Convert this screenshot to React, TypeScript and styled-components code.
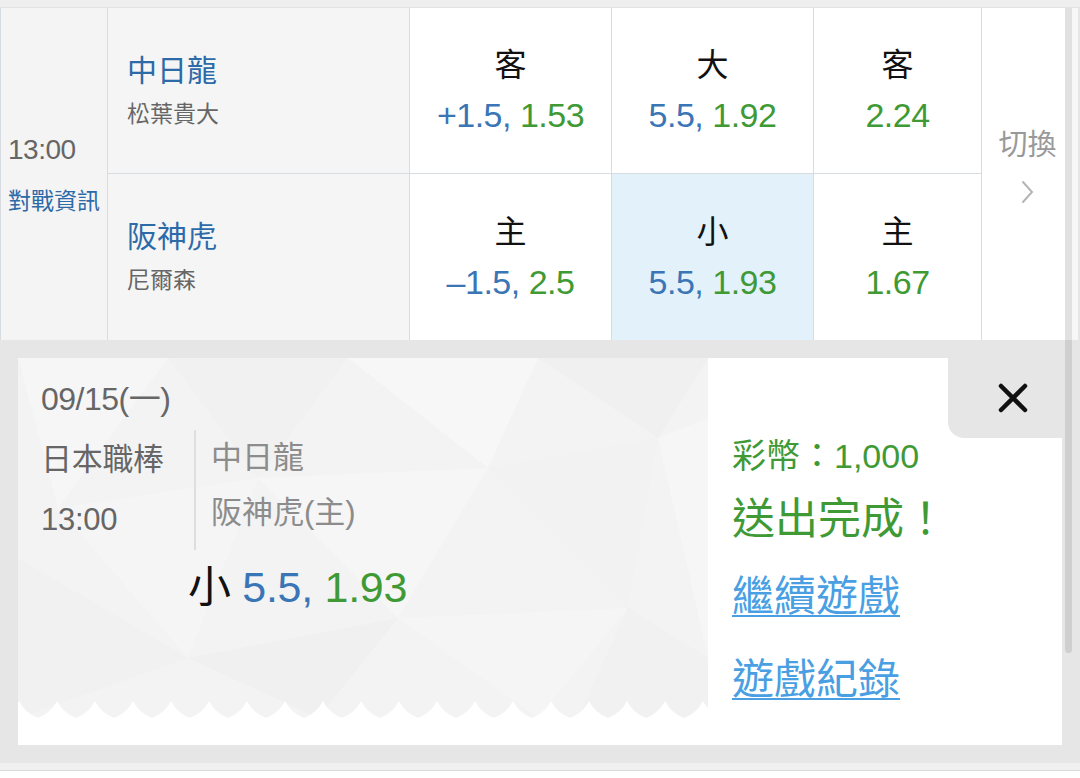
import styled, { createGlobalStyle } from "styled-components";

const GlobalStyle = createGlobalStyle`
  html, body {
    margin: 0;
    padding: 0;
    background: #fff;
  }
  body {
    width: 1080px;
    height: 778px;
    overflow: hidden;
    font-family: "Liberation Sans", "Noto Sans CJK TC", sans-serif;
  }
`

const BLUE = '#3a76b6'
const GREEN = '#3f9a36'
const LINE = '#d7dce1'

const polyArt = encodeURIComponent(`<svg xmlns='http://www.w3.org/2000/svg' width='690' height='360' viewBox='0 0 690 360'>
<rect width='690' height='360' fill='#f3f3f3'/>
<polygon points='0,0 150,0 40,150' fill='#f6f6f6'/>
<polygon points='150,0 330,0 240,120' fill='#f1f1f1'/>
<polygon points='40,150 240,120 170,300' fill='#f5f5f5'/>
<polygon points='330,0 520,0 470,110' fill='#f7f7f7'/>
<polygon points='520,0 690,0 640,80' fill='#f0f0f0'/>
<polygon points='240,120 470,110 380,260' fill='#f6f6f6'/>
<polygon points='470,110 640,80 610,250' fill='#f2f2f2'/>
<polygon points='640,80 690,60 690,300' fill='#f6f6f6'/>
<polygon points='0,200 170,300 0,360' fill='#f1f1f1'/>
<polygon points='170,300 380,260 300,360' fill='#f0f0f0'/>
<polygon points='380,260 610,250 520,360' fill='#f5f5f5'/>
<polygon points='610,250 690,300 690,360 560,360' fill='#f1f1f1'/>
</svg>`)

const toothArt = encodeURIComponent(`<svg xmlns='http://www.w3.org/2000/svg' width='38' height='17' viewBox='0 0 38 17'>
<path d='M0 17 Q 13 12 19 0 Q 25 12 38 17 Z' fill='#ffffff'/>
</svg>`)

const Page = styled.div`
  display: flex;
  flex-direction: column;
  width: 1080px;
  height: 778px;
`

const TopStrip = styled.div`
  height: 8px;
  background: #eeeeee;
  border-bottom: 1px solid #e2e2e2;
  box-sizing: border-box;
`

const MatchTable = styled.div`
  display: grid;
  grid-template-columns: 108px 302px 202px 202px 168px 81px 17px;
  grid-template-rows: 166px 166px;
`

const TimeCell = styled.div`
  grid-row: span 2;
  display: flex;
  flex-direction: column;
  justify-content: center;
  padding: 0 0 4px 7px;
  background: #f4f4f4;
  border-left: 1px solid ${LINE};
  border-right: 1px solid ${LINE};
  box-sizing: border-box;
`

const KickOff = styled.div`
  font-size: 28px;
  line-height: 38px;
  color: #666;
  letter-spacing: -0.5px;
`

const InfoLink = styled.div`
  margin-top: 19px;
  font-size: 23px;
  line-height: 26px;
  color: #2d6aa8;
`

const TeamCell = styled.div<{ $top?: boolean }>`
  display: flex;
  flex-direction: column;
  justify-content: center;
  padding: 0 0 2px 19px;
  background: #f5f5f5;
  border-right: 1px solid ${LINE};
  border-bottom: ${p => (p.$top ? `1px solid ${LINE}` : 'none')};
  box-sizing: border-box;
`

const TeamName = styled.div`
  font-size: 30px;
  line-height: 40px;
  color: #2d6aa8;
`

const Pitcher = styled.div`
  margin-top: 8px;
  font-size: 23px;
  line-height: 30px;
  color: #666;
`

const OddCell = styled.div<{ $top?: boolean; $picked?: boolean }>`
  display: flex;
  flex-direction: column;
  align-items: center;
  justify-content: center;
  background: ${p => (p.$picked ? '#e3f1fb' : '#fff')};
  border-right: 1px solid ${LINE};
  border-bottom: ${p => (p.$top ? `1px solid ${LINE}` : 'none')};
  box-sizing: border-box;
`

const OddLabel = styled.div`
  font-size: 32px;
  line-height: 40px;
  color: #111;
`

const OddValue = styled.div`
  margin-top: 9px;
  font-size: 34px;
  line-height: 42px;
  letter-spacing: -0.5px;
`

const Blue = styled.span`
  color: ${BLUE};
`

const Green = styled.span`
  color: ${GREEN};
`

const SwitchCell = styled.div`
  grid-row: span 2;
  display: flex;
  flex-direction: column;
  align-items: center;
  justify-content: center;
  background: #fff;
  padding: 0 0 16px 10px;
  color: #999;
`

const SwitchText = styled.div`
  font-size: 29px;
  line-height: 36px;
`

const ScrollCell = styled.div`
  grid-row: span 2;
  background: linear-gradient(to right, #fff 0 2px, #e1e1e1 2px 9px, #f7f7f7 9px 15px, #e6e6e6 15px);
`

const Overlay = styled.div`
  position: relative;
  height: 423px;
  padding: 18px;
  box-sizing: border-box;
  background: #e6e6e6;
`

const ScrollThumb = styled.div`
  position: absolute;
  left: 1065px;
  top: 0;
  width: 7px;
  height: 313px;
  border-radius: 0 0 4px 4px;
  background: #cfcfcf;
`

const Card = styled.div`
  position: relative;
  display: flex;
  width: 1044px;
  height: 387px;
  background: #fff;
`

const Ticket = styled.div`
  position: relative;
  width: 690px;
  height: 360px;
  padding: 22px 0 0 23px;
  box-sizing: border-box;
  background: url("data:image/svg+xml,${polyArt}") no-repeat;

  &::after {
    content: "";
    position: absolute;
    left: 0;
    right: 0;
    bottom: 0;
    height: 17px;
    background: url("data:image/svg+xml,${toothArt}") repeat-x 20px 0;
  }
`

const TicketDate = styled.div`
  font-size: 32px;
  line-height: 38px;
  color: #666;
  letter-spacing: -0.5px;
`

const MatchRow = styled.div`
  display: flex;
  margin-top: 12px;
`

const LeagueCol = styled.div`
  width: 155px;
  border-right: 2px solid #dedede;
  box-sizing: border-box;
  color: #666;
`

const LeagueLine = styled.div`
  font-size: 31px;
  line-height: 60px;
  letter-spacing: -0.3px;
`

const TeamsCol = styled.div`
  padding-left: 15px;
  color: #8c8c8c;
`

const TeamLine = styled.div`
  font-size: 31px;
  line-height: 55px;
`

const BetLine = styled.div`
  margin: 12px 0 0 147px;
  font-size: 43px;
  line-height: 50px;
  letter-spacing: -0.3px;
  color: #111;
`

const Result = styled.div`
  display: flex;
  flex-direction: column;
  align-items: flex-start;
  padding: 78px 0 0 24px;
`

const Coins = styled.div`
  font-size: 34px;
  line-height: 40px;
  color: ${GREEN};
`

const Done = styled.div`
  margin-top: 14px;
  font-size: 43px;
  line-height: 58px;
  color: ${GREEN};
`

const ActionLink = styled.a<{ $gap: number }>`
  margin-top: ${p => p.$gap}px;
  font-size: 42px;
  line-height: 54px;
  color: #4a9fe3;
  text-decoration: underline;
  text-decoration-thickness: 2px;
  text-underline-offset: 4px;
`

const CloseButton = styled.button`
  position: absolute;
  top: 0;
  right: 0;
  display: flex;
  align-items: center;
  justify-content: flex-end;
  width: 114px;
  height: 80px;
  padding: 0 34px 0 0;
  border: none;
  border-bottom-left-radius: 16px;
  background: #e6e6e6;
`

const BottomStrip = styled.div`
  height: 15px;
  background: linear-gradient(to bottom, #f0f0f0 0 7px, #d9d9d9 7px 8px, #fff 8px);
`

const Chevron = () => (
  <svg width="16" height="26" viewBox="0 0 16 26" fill="none" style={{ marginTop: 16 }}>
    <path d="M3 3 L12 13 L3 23" stroke="#b5b5b5" strokeWidth="2" strokeLinecap="round" />
  </svg>
)

const CloseIcon = () => (
  <svg width="30" height="30" viewBox="0 0 30 30">
    <path d="M3 3 L27 27 M27 3 L3 27" stroke="#111" strokeWidth="4.5" strokeLinecap="round" />
  </svg>
)

type Odd = { label: string; line?: string; price: string; picked?: boolean }

const awayOdds: Odd[] = [
  { label: '客', line: '+1.5', price: '1.53' },
  { label: '大', line: '5.5', price: '1.92' },
  { label: '客', price: '2.24' },
]

const homeOdds: Odd[] = [
  { label: '主', line: '–1.5', price: '2.5' },
  { label: '小', line: '5.5', price: '1.93', picked: true },
  { label: '主', price: '1.67' },
]

const renderOdds = (odds: Odd[], top: boolean) =>
  odds.map((o, i) => (
    <OddCell key={i} $top={top} $picked={o.picked}>
      <OddLabel>{o.label}</OddLabel>
      <OddValue>
        {o.line && <Blue>{o.line}, </Blue>}
        <Green>{o.price}</Green>
      </OddValue>
    </OddCell>
  ))

const App = () => {
  return (
    <Page>
      <GlobalStyle />
      <TopStrip />
      <MatchTable>
        <TimeCell>
          <KickOff>13:00</KickOff>
          <InfoLink>對戰資訊</InfoLink>
        </TimeCell>
        <TeamCell $top>
          <TeamName>中日龍</TeamName>
          <Pitcher>松葉貴大</Pitcher>
        </TeamCell>
        {renderOdds(awayOdds, true)}
        <SwitchCell>
          <SwitchText>切換</SwitchText>
          <Chevron />
        </SwitchCell>
        <ScrollCell />
        <TeamCell>
          <TeamName>阪神虎</TeamName>
          <Pitcher>尼爾森</Pitcher>
        </TeamCell>
        {renderOdds(homeOdds, false)}
      </MatchTable>

      <Overlay>
        <Card>
          <Ticket>
            <TicketDate>09/15(一)</TicketDate>
            <MatchRow>
              <LeagueCol>
                <LeagueLine>日本職棒</LeagueLine>
                <LeagueLine>13:00</LeagueLine>
              </LeagueCol>
              <TeamsCol>
                <TeamLine>中日龍</TeamLine>
                <TeamLine>阪神虎(主)</TeamLine>
              </TeamsCol>
            </MatchRow>
            <BetLine>
              小 <Blue>5.5, </Blue><Green>1.93</Green>
            </BetLine>
          </Ticket>
          <Result>
            <Coins>彩幣：1,000</Coins>
            <Done>送出完成！</Done>
            <ActionLink $gap={22}>繼續遊戲</ActionLink>
            <ActionLink $gap={29}>遊戲紀錄</ActionLink>
          </Result>
          <CloseButton>
            <CloseIcon />
          </CloseButton>
        </Card>
        <ScrollThumb />
      </Overlay>
      <BottomStrip />
    </Page>
  )
}

export default App;
